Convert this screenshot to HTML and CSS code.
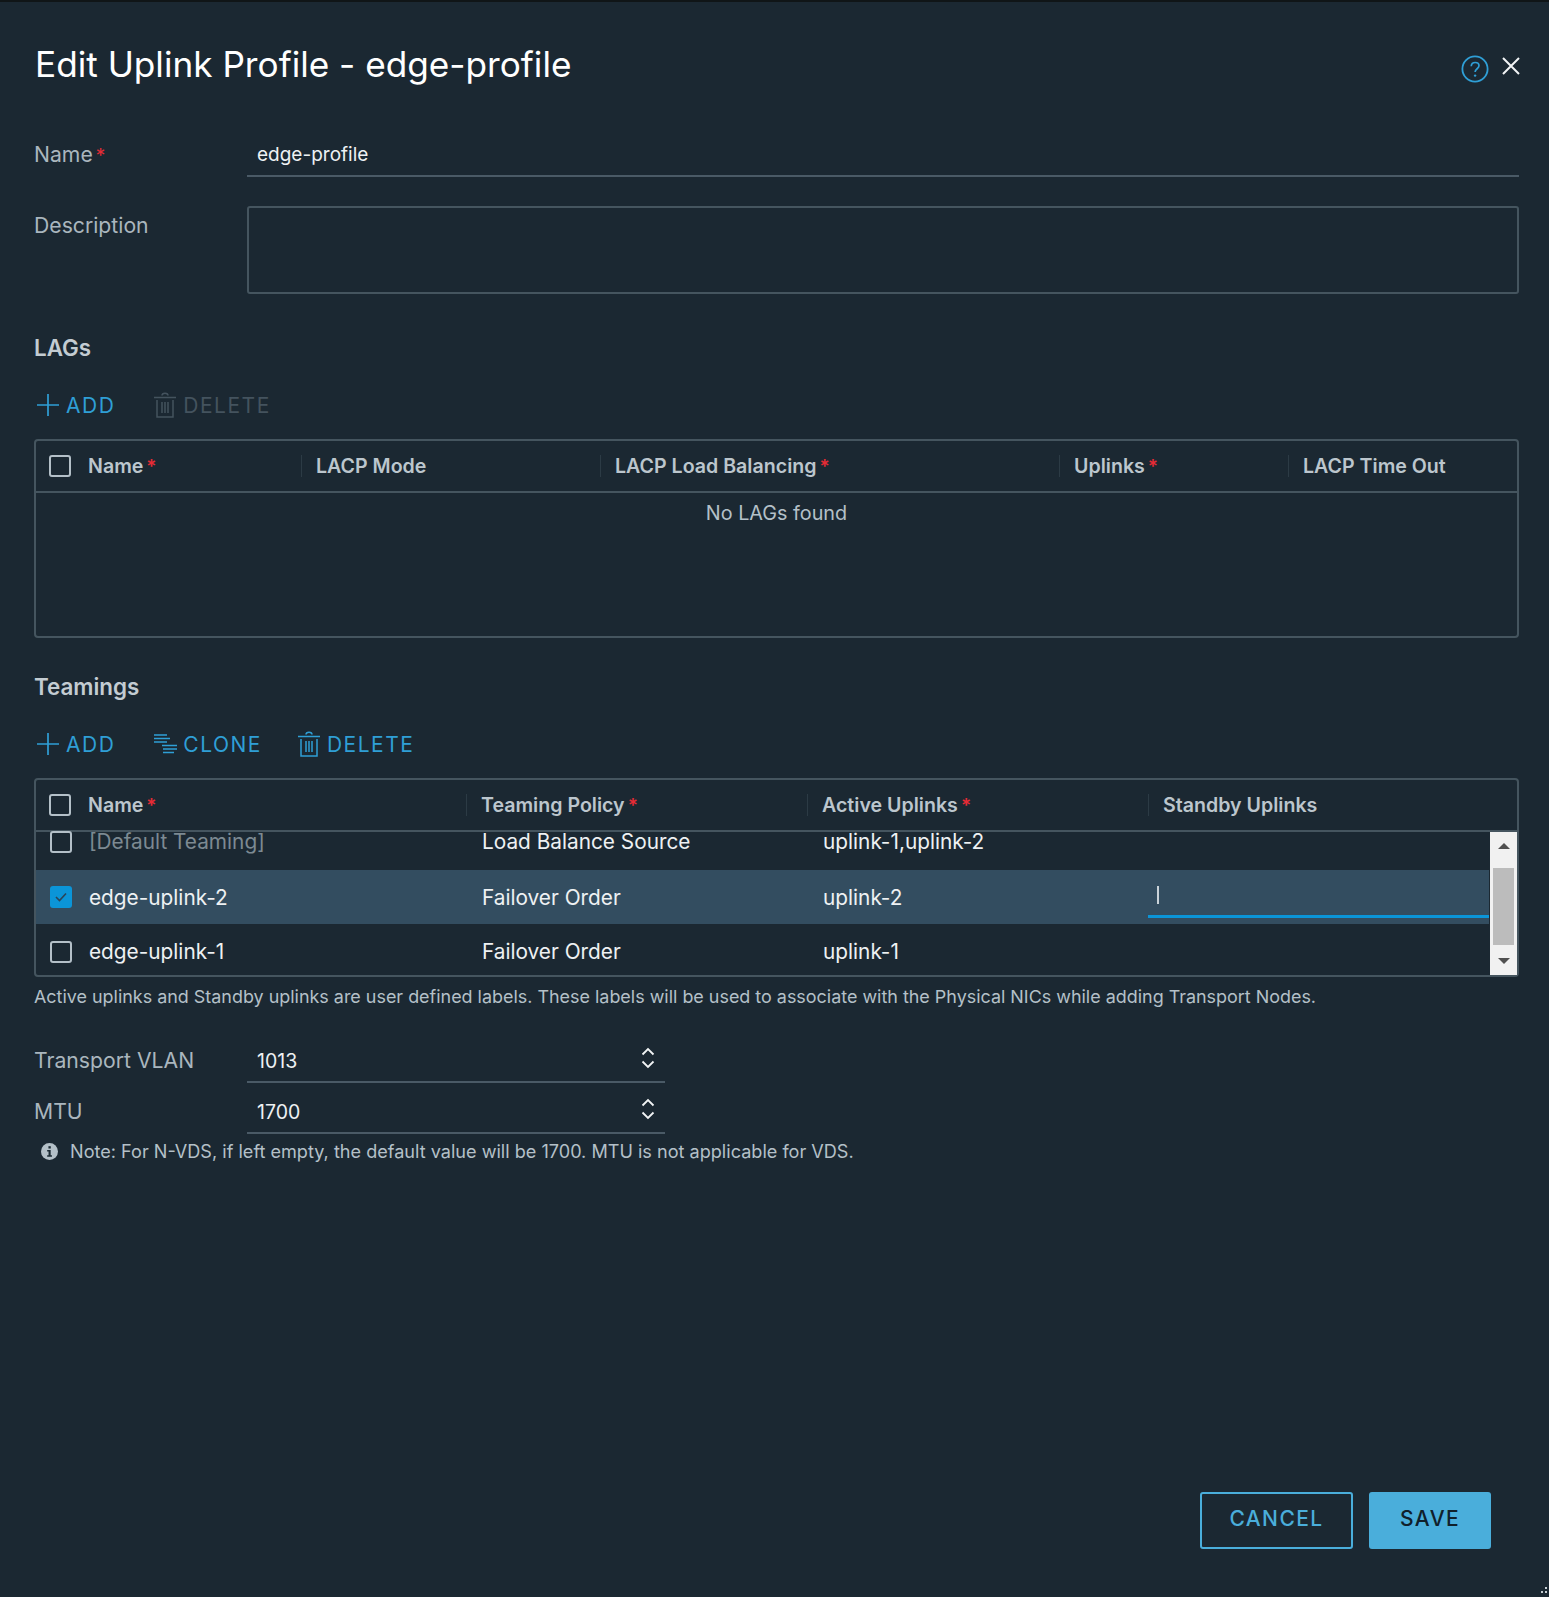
FILE: index.html
```html
<!DOCTYPE html>
<html lang="en">
<head>
<meta charset="UTF-8">
<meta name="viewport" content="width=device-width, initial-scale=1.0">
<title>Edit Uplink Profile</title>
<link rel="stylesheet" href="styles.css">
</head>
<body>
<div class="modal">
    <div class="modal-head">
        <h1>Edit Uplink Profile - edge-profile</h1>
        <div class="head-icons">
            <svg class="help-icon" viewBox="0 0 28 28"><circle cx="14" cy="14" r="12.6" fill="none" stroke="#2f9fd6" stroke-width="1.8"/><path d="M10.2 11.2c.2-2.4 1.9-3.7 4-3.7 2.2 0 3.8 1.4 3.8 3.3 0 2.9-3.9 3-3.9 6.2" fill="none" stroke="#2f9fd6" stroke-width="1.7"/><circle cx="14.1" cy="20.6" r="1.2" fill="#2f9fd6"/></svg>
            <svg class="close-icon" viewBox="0 0 18 18"><path d="M1 1l16 16M17 1L1 17" stroke="#f2f4f5" stroke-width="2" fill="none"/></svg>
        </div>
    </div>

    <div class="field field-name">
        <label class="field-label">Name<span class="req">*</span></label>
        <div class="line-input">edge-profile</div>
    </div>
    <div class="field field-desc">
        <label class="field-label">Description</label>
        <div class="text-area"></div>
    </div>

    <h2 class="section-title lags-title">LAGs</h2>
    <div class="actions">
        <span class="action">
            <svg class="plus-icon" viewBox="0 0 22 24"><path d="M0 12h22M11 1v22" stroke="currentColor" stroke-width="1.7" fill="none"/></svg>ADD
        </span>
        <span class="action off">
            <svg class="trash-icon" viewBox="0 0 22 26"><path d="M0 5.5h22M3 8v17h16V8M8 3.5c0-3 6-3 6 0M8 10v11M11 10v11M14 10v11" stroke="currentColor" stroke-width="1.5" fill="none"/></svg>DELETE
        </span>
    </div>
    <div class="grid-box">
        <div class="grid-head lag-cols">
            <div class="col first"><span class="check"></span>Name<span class="req">*</span></div>
            <div class="col">LACP Mode</div>
            <div class="col">LACP Load Balancing<span class="req">*</span></div>
            <div class="col">Uplinks<span class="req">*</span></div>
            <div class="col">LACP Time Out</div>
        </div>
        <div class="empty">No LAGs found</div>
    </div>

    <h2 class="section-title team-title">Teamings</h2>
    <div class="actions">
        <span class="action">
            <svg class="plus-icon" viewBox="0 0 22 24"><path d="M0 12h22M11 1v22" stroke="currentColor" stroke-width="1.7" fill="none"/></svg>ADD
        </span>
        <span class="action">
            <svg class="clone-icon" viewBox="0 0 24 22"><path d="M0 2h13M0 5.5h16M0 9h13M8 12.5h15M9 16h14M9 19.5h11" stroke="currentColor" stroke-width="1.5" fill="none"/></svg>CLONE
        </span>
        <span class="action">
            <svg class="trash-icon" viewBox="0 0 22 26"><path d="M0 5.5h22M3 8v17h16V8M8 3.5c0-3 6-3 6 0M8 10v11M11 10v11M14 10v11" stroke="currentColor" stroke-width="1.5" fill="none"/></svg>DELETE
        </span>
    </div>
    <div class="grid-box">
        <div class="grid-head team-cols">
            <div class="col first"><span class="check"></span>Name<span class="req">*</span></div>
            <div class="col">Teaming Policy<span class="req">*</span></div>
            <div class="col">Active Uplinks<span class="req">*</span></div>
            <div class="col">Standby Uplinks</div>
        </div>
        <div class="grid-body">
            <div class="rows">
                <div class="row team-cols scrolled">
                    <div class="cell first"><span class="check"></span><span class="muted">[Default Teaming]</span></div>
                    <div class="cell">Load Balance Source</div>
                    <div class="cell">uplink-1,uplink-2</div>
                    <div class="cell"></div>
                </div>
                <div class="row team-cols selected">
                    <div class="cell first">
                        <span class="check checked"><svg viewBox="0 0 22 22"><path d="M6 11l3.5 3.5L16 7.5" stroke="#2b4457" stroke-width="1.6" fill="none"/></svg></span>edge-uplink-2
                    </div>
                    <div class="cell">Failover Order</div>
                    <div class="cell">uplink-2</div>
                    <div class="cell edit-cell"><span class="caret"></span></div>
                </div>
                <div class="row team-cols last">
                    <div class="cell first"><span class="check"></span>edge-uplink-1</div>
                    <div class="cell">Failover Order</div>
                    <div class="cell">uplink-1</div>
                    <div class="cell"></div>
                </div>
            </div>
            <div class="scrollbar">
                <span class="arrow up"></span>
                <span class="thumb"></span>
                <span class="arrow down"></span>
            </div>
        </div>
    </div>
    <p class="hint">Active uplinks and Standby uplinks are user defined labels. These labels will be used to associate with the Physical NICs while adding Transport Nodes.</p>

    <div class="field field-num vlan">
        <label class="field-label">Transport VLAN</label>
        <div class="line-input short">1013<svg class="spin-icon" viewBox="0 0 14 24"><path d="M1.5 8.5L7 3l5.5 5.5M1.5 15.5L7 21l5.5-5.5" stroke="#f2f4f5" stroke-width="1.8" fill="none"/></svg></div>
    </div>
    <div class="field field-num mtu">
        <label class="field-label">MTU</label>
        <div class="line-input short">1700<svg class="spin-icon" viewBox="0 0 14 24"><path d="M1.5 8.5L7 3l5.5 5.5M1.5 15.5L7 21l5.5-5.5" stroke="#f2f4f5" stroke-width="1.8" fill="none"/></svg></div>
    </div>
    <div class="note">
        <svg class="info-icon" viewBox="0 0 16 16"><circle cx="8" cy="8" r="8" fill="#b4c0c8"/><rect x="7" y="3" width="2.2" height="2.2" fill="#1b2a33"/><path d="M5.8 6.6h3.3v5h1.2V13H5.8v-1.4h1.3V8H5.8z" fill="#1b2a33"/></svg>
        Note: For N-VDS, if left empty, the default value will be 1700. MTU is not applicable for VDS.
    </div>

    <div class="modal-foot">
        <button type="button" class="btn btn-outline">CANCEL</button>
        <button type="button" class="btn btn-primary">SAVE</button>
    </div>
    <svg class="grip" viewBox="0 0 12 12"><path d="M8 2h2v2H8zM4 6h2v2H4zM8 6h2v2H8z" fill="#c5cdd2"/></svg>
</div>
</body>
</html>
```

FILE: styles.css
```css
* {
    box-sizing: border-box;
}

body {
    margin: 0;
    background-color: #1b2832;
    color: #eef1f3;
    font-family: Inter, "Liberation Sans", sans-serif;
    font-size: 16px;
}

.modal {
    position: relative;
    display: flex;
    flex-direction: column;
    height: 1597px;
    padding: 0 30px 0 34px;
    border-top: 2px solid #101517;
    overflow: hidden;
}

.modal-head {
    display: flex;
    justify-content: space-between;
    height: 80px;
    padding-top: 42px;
}

h1 {
    margin: 0 0 0 1px;
    font-size: 35.2px;
    font-weight: 400;
    line-height: 40px;
    color: #fff;
}

.head-icons {
    display: flex;
    align-items: flex-start;
    gap: 13px;
    margin-right: -1px;
    padding-top: 10px;
}

.help-icon {
    width: 28px;
    height: 28px;
    margin-top: 1px;
}

.close-icon {
    width: 18px;
    height: 18px;
    margin-top: 3px;
}

.field {
    display: flex;
}

.field-label {
    width: 213px;
    flex: none;
    color: #aab6be;
    font-size: 21.2px;
}

.req {
    color: #e62b35;
    font-size: 19px;
    line-height: 1;
    margin-left: 3px;
    display: inline-block;
}

.field-name {
    height: 94px;
    padding-top: 59px;
    margin-top: -1px;
    align-items: flex-start;
}

.field-name .field-label {
    padding-top: 1px;
}

.line-input {
    position: relative;
    flex: 1;
    height: 37px;
    padding: 3px 0 0 10px;
    border-bottom: 2px solid #4a5a66;
    font-size: 19px;
}

.field-desc {
    height: 88px;
    margin-top: 31px;
}

.field-desc .field-label {
    padding-top: 6px;
}

.text-area {
    flex: 1;
    border: 2px solid #45555f;
    border-radius: 3px;
}

.section-title {
    margin: 0;
    font-size: 22.4px;
    font-weight: 600;
    line-height: 26px;
    color: #c3ccd2;
}

.lags-title {
    margin-top: 41px;
}

.team-title {
    margin-top: 36px;
}

.actions {
    display: flex;
    gap: 36px;
    height: 36px;
    margin-top: 26px;
    margin-bottom: 16px;
    padding-left: 3px;
}

.action {
    display: flex;
    align-items: center;
    gap: 7px;
    color: #2f9fd6;
    font-size: 21px;
    letter-spacing: 1.5px;
}

.action:first-child {
    margin-right: 3px;
}

.action.off {
    color: #44535e;
}

.plus-icon {
    width: 22px;
    height: 24px;
}

.trash-icon {
    width: 22px;
    height: 26px;
}

.clone-icon {
    width: 24px;
    height: 22px;
    margin-right: -2px;
}

.grid-box {
    display: flex;
    flex-direction: column;
    height: 199px;
    border: 2px solid #45555f;
    border-radius: 4px;
}

.grid-head {
    display: grid;
    height: 52px;
    flex: none;
    align-items: center;
    border-bottom: 2px solid #45555f;
    color: #bcc6cd;
    font-size: 19.6px;
    font-weight: 600;
}

.lag-cols {
    grid-template-columns: 265px 299px 459px 229px 1fr;
}

.team-cols {
    grid-template-columns: 430px 341px 341px 1fr;
}

.col {
    display: flex;
    align-items: center;
    height: 22px;
    padding-left: 14px;
    border-left: 1px solid #2c3b45;
}

.col.first {
    border-left: none;
    padding-left: 13px;
}

.check {
    display: inline-flex;
    width: 22px;
    height: 22px;
    margin-right: 17px;
    flex: none;
    border: 2px solid #b4c0c8;
    border-radius: 3px;
}

.check.checked {
    border: none;
    background-color: #0b95d8;
}

.empty {
    text-align: center;
    color: #b4c0c8;
    font-size: 19.8px;
    padding-top: 8px;
}

.grid-body {
    display: flex;
    flex: 1;
    min-height: 0;
}

.rows {
    flex: 1;
    min-width: 0;
}

.row {
    display: grid;
    height: 54px;
    align-items: center;
    font-size: 20.8px;
}

/* first row is scrolled up under the header */
.row.scrolled {
    height: 38px;
    align-items: start;
    line-height: 20px;
}

.row.selected {
    background-color: #334d60;
}

.row.last {
    height: 51px;
    padding-top: 4px;
}

.cell {
    display: flex;
    align-items: center;
    padding-left: 16px;
    height: 100%;
}

.cell.first {
    padding-left: 14px;
}

.scrolled .cell {
    height: 20px;
}

.muted {
    color: #7d8a92;
}

.edit-cell {
    height: 48px;
    align-self: start;
    border-bottom: 3px solid #0b95d8;
    padding-left: 9px;
    padding-top: 5px;
}

.caret {
    width: 2px;
    height: 18px;
    background-color: #c9d2d8;
}

.scrollbar {
    display: flex;
    flex-direction: column;
    align-items: center;
    width: 27px;
    margin-left: 1px;
    background-color: #f1f1f1;
    flex: none;
}

.arrow {
    width: 0;
    height: 0;
    margin: 11px 0;
    border-left: 6px solid transparent;
    border-right: 6px solid transparent;
}

.arrow.up {
    border-bottom: 6px solid #505050;
}

.arrow.down {
    border-top: 6px solid #505050;
    margin-top: 13px;
}

.thumb {
    width: 21px;
    height: 77px;
    margin-top: 8px;
    background-color: #bcbcbc;
}

.hint {
    margin: 8px 0 0;
    font-size: 17.93px;
    line-height: 24px;
    color: #b4c0c8;
}

.field-num {
    height: 45px;
    align-items: flex-start;
}

.vlan {
    margin-top: 29px;
}

.mtu {
    margin-top: 6px;
}

.field-num .field-label {
    padding-top: 9px;
}

.line-input.short {
    flex: none;
    width: 418px;
    height: 45px;
    padding-top: 11px;
    font-size: 19.5px;
}

.spin-icon {
    position: absolute;
    right: 10px;
    top: 8px;
    width: 14px;
    height: 24px;
}

.note {
    display: flex;
    align-items: center;
    gap: 12px;
    margin-top: 5px;
    padding-left: 7px;
    font-size: 18.1px;
    line-height: 24px;
    color: #b4c0c8;
}

.info-icon {
    width: 17px;
    height: 17px;
}

.modal-foot {
    display: flex;
    justify-content: flex-end;
    gap: 16px;
    margin-top: auto;
    margin-right: 28px;
    margin-bottom: 48px;
}

.btn {
    height: 57px;
    border-radius: 3px;
    font-family: Inter, "Liberation Sans", sans-serif;
    font-size: 21px;
    font-weight: 500;
    letter-spacing: 1.4px;
    padding: 0 0 4px;
}

.btn-outline {
    width: 153px;
    border: 2px solid #4aaedb;
    background-color: transparent;
    color: #4aaedb;
}

.btn-primary {
    width: 122px;
    border: none;
    background-color: #4aaedb;
    color: #10202b;
}

.grip {
    position: absolute;
    right: 0;
    bottom: 0;
    width: 12px;
    height: 12px;
}
```
